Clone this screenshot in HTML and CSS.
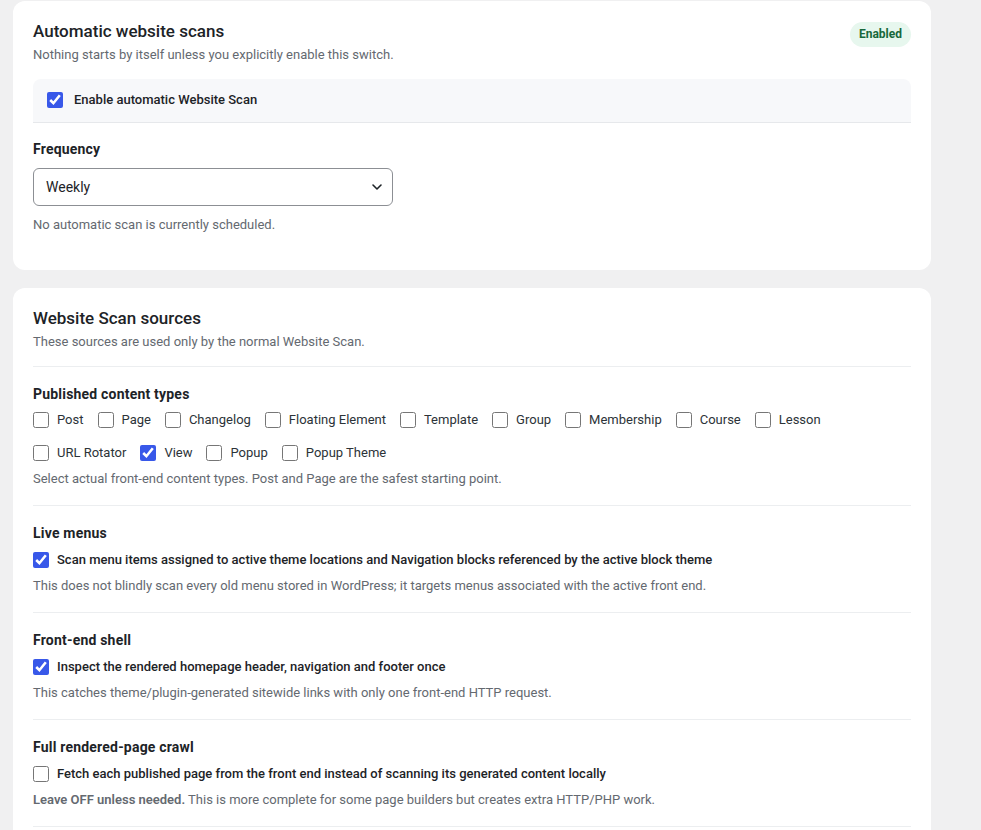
FILE: index.html
```html
<!DOCTYPE html>
<html>
<head>
    <meta charset="utf-8">
    <title>Website Scan settings</title>
    <link rel="stylesheet" href="styles.css">
</head>
<body>
    <div class="wrap">
        <section class="card">
            <div class="card-head">
                <div>
                    <h2>Automatic website scans</h2>
                    <p class="desc">Nothing starts by itself unless you explicitly enable this switch.</p>
                </div>
                <span class="badge">Enabled</span>
            </div>

            <label class="toggle-row">
                <input type="checkbox" checked>
                <span>Enable automatic Website Scan</span>
            </label>

            <div class="field">
                <div class="field-label">Frequency</div>
                <div class="select-wrap">
                    <select>
                        <option>Weekly</option>
                        <option>Daily</option>
                        <option>Monthly</option>
                    </select>
                    <svg class="chevron" width="12" height="12" viewBox="0 0 12 12" aria-hidden="true">
                        <path d="M2 4l4 4 4-4" fill="none" stroke="#1d2327" stroke-width="1.6" stroke-linecap="round" stroke-linejoin="round"/>
                    </svg>
                </div>
                <p class="help">No automatic scan is currently scheduled.</p>
            </div>
        </section>

        <section class="card">
            <div class="card-head divided">
                <div>
                    <h2>Website Scan sources</h2>
                    <p class="desc">These sources are used only by the normal Website Scan.</p>
                </div>
            </div>

            <div class="source">
                <div class="field-label">Published content types</div>
                <div class="types">
                    <label class="check"><input type="checkbox"> Post</label>
                    <label class="check"><input type="checkbox"> Page</label>
                    <label class="check"><input type="checkbox"> Changelog</label>
                    <label class="check"><input type="checkbox"> Floating Element</label>
                    <label class="check"><input type="checkbox"> Template</label>
                    <label class="check"><input type="checkbox"> Group</label>
                    <label class="check"><input type="checkbox"> Membership</label>
                    <label class="check"><input type="checkbox"> Course</label>
                    <label class="check"><input type="checkbox"> Lesson</label>
                    <label class="check"><input type="checkbox"> URL Rotator</label>
                    <label class="check"><input type="checkbox" checked> View</label>
                    <label class="check"><input type="checkbox"> Popup</label>
                    <label class="check"><input type="checkbox"> Popup Theme</label>
                </div>
                <p class="help">Select actual front-end content types. Post and Page are the safest starting point.</p>
            </div>

            <div class="source">
                <div class="field-label">Live menus</div>
                <label class="check strong"><input type="checkbox" checked> Scan menu items assigned to active theme locations and Navigation blocks referenced by the active block theme</label>
                <p class="help">This does not blindly scan every old menu stored in WordPress; it targets menus associated with the active front end.</p>
            </div>

            <div class="source">
                <div class="field-label">Front-end shell</div>
                <label class="check strong"><input type="checkbox" checked> Inspect the rendered homepage header, navigation and footer once</label>
                <p class="help">This catches theme/plugin-generated sitewide links with only one front-end HTTP request.</p>
            </div>

            <div class="source">
                <div class="field-label">Full rendered-page crawl</div>
                <label class="check strong"><input type="checkbox"> Fetch each published page from the front end instead of scanning its generated content locally</label>
                <p class="help"><b>Leave OFF unless needed.</b> This is more complete for some page builders but creates extra HTTP/PHP work.</p>
            </div>
        </section>
    </div>
</body>
</html>
```

FILE: styles.css
```css
body {
    margin: 0;
    background-color: #f0f0f1;
    font-family: -apple-system, BlinkMacSystemFont, "Segoe UI", Roboto, "Helvetica Neue", sans-serif;
    font-size: 13px;
    color: #1d2327;
}
.wrap {
    width: 918px;
    padding: 1px 0 0 13px;
}
.card {
    background: #fff;
    border-radius: 12px;
    padding: 20px 20px 36px;
    margin-bottom: 18px;
}
.card-head {
    display: flex;
    justify-content: space-between;
    align-items: flex-start;
}
.card-head.divided {
    padding-bottom: 14px;
    border-bottom: 1px solid #eceef0;
}
h2 {
    margin: 0;
    font-size: 17px;
    line-height: 20px;
    font-weight: 500;
    color: #1d2327;
}
.desc {
    margin: 4px 0 0;
    line-height: 20px;
    color: #646970;
}
.badge {
    margin-top: 1px;
    padding: 0 9px;
    line-height: 25px;
    border-radius: 999px;
    background: #e7f7ee;
    color: #17683b;
    font-size: 12px;
    font-weight: 700;
}
.toggle-row {
    display: flex;
    align-items: center;
    gap: 11px;
    margin-top: 14px;
    padding: 12px 14px 13px;
    line-height: 18px;
    background: #f7f8fa;
    border-radius: 8px 8px 0 0;
    border-bottom: 1px solid #e6e8eb;
    font-weight: 500;
    cursor: pointer;
}
input[type="checkbox"] {
    width: 16px;
    height: 16px;
    margin: 0;
    flex: none;
    accent-color: #3858e9;
}
.field {
    margin-top: 17px;
}
.field-label {
    font-size: 14px;
    font-weight: 700;
    line-height: 18px;
    letter-spacing: 0.2px;
}
.select-wrap {
    position: relative;
    width: 360px;
    margin-top: 10px;
}
.select-wrap select {
    appearance: none;
    width: 100%;
    height: 38px;
    padding: 0 36px 0 12px;
    border: 1px solid #8c8f94;
    border-radius: 6px;
    background: #fff;
    font: inherit;
    font-size: 14px;
    color: #1d2327;
}
.chevron {
    position: absolute;
    right: 10px;
    top: 13px;
    pointer-events: none;
}
.help {
    margin: 10px 0 0;
    line-height: 18px;
    color: #646970;
}
.help b {
    font-weight: 600;
}
.source {
    padding: 18px 0 17px;
    border-bottom: 1px solid #eceef0;
}
.source .field-label {
    margin-bottom: 7px;
}
.source > .check {
    margin-top: 8px;
}
.source .help {
    margin-top: 7px;
}
.types {
    display: flex;
    flex-wrap: wrap;
    gap: 13px 14px;
}
.check {
    display: flex;
    align-items: center;
    gap: 8px;
    line-height: 20px;
    color: #2c3338;
    cursor: pointer;
}
.check.strong {
    font-weight: 500;
    color: #1d2327;
}
```
